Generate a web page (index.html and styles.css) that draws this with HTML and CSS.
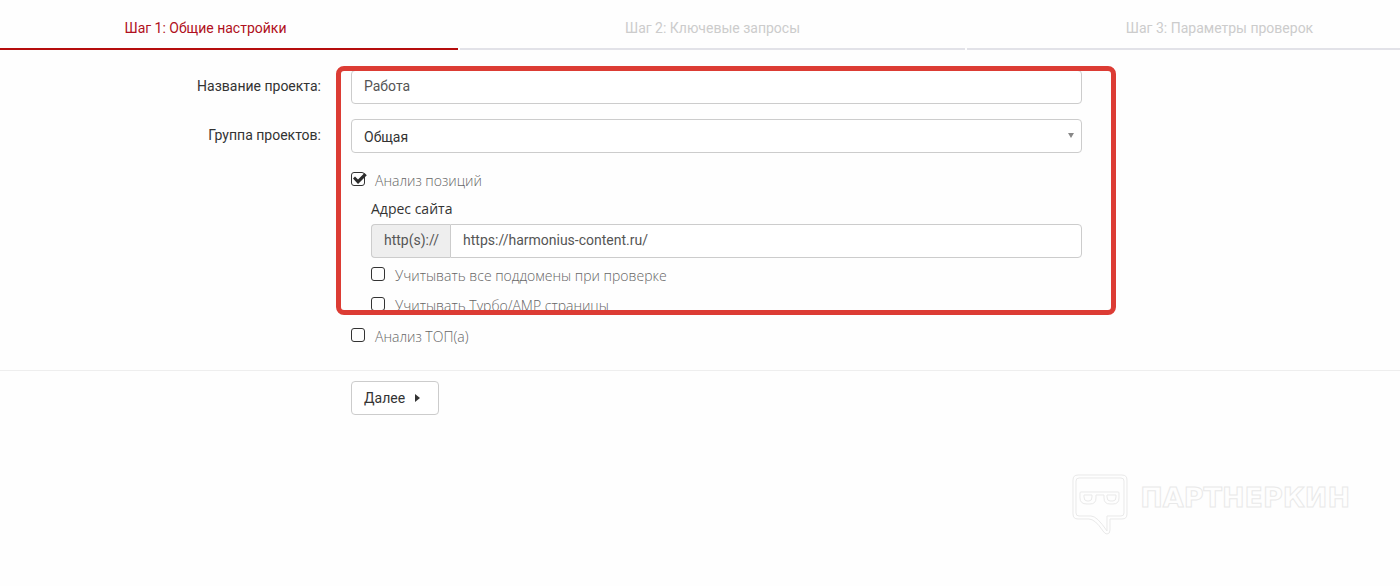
FILE: index.html
```
<!DOCTYPE html>
<html lang="ru">
<head>
<meta charset="UTF-8">
<meta name="viewport" content="width=device-width, initial-scale=1.0">
<title>Новый проект</title>
<link rel="stylesheet" href="styles.css">
</head>
<body>

<nav class="steps-wrap">
    <div class="steps">
        <a class="step active" href="#step1">Шаг 1: Общие настройки</a>
        <a class="step" href="#step2">Шаг 2: Ключевые запросы</a>
        <a class="step" href="#step3">Шаг 3: Параметры проверок</a>
    </div>
</nav>

<form>
    <div class="form-grid">
        <label class="control-label" for="name">Название проекта:</label>
        <input class="form-control" type="text" id="name" value="Работа">

        <label class="control-label" for="group">Группа проектов:</label>
        <div class="select">
            <select class="form-control" id="group">
                <option>Общая</option>
            </select>
        </div>

        <div class="options">
            <label class="check">
                <input type="checkbox" checked>
                <svg class="tick" viewBox="0 0 16 14"><path d="M2 6.5L4 4.5L7 7.5L13.5 1L15.8 3.3L7 12Z"/></svg>
                <span>Анализ позиций</span>
            </label>
            <div class="nested">
                <label class="site-label" for="site">Адрес сайта</label>
                <div class="input-group">
                    <span class="addon">http(s)://</span>
                    <input class="form-control" type="text" id="site" value="https://harmonius-content.ru/">
                </div>
                <label class="check">
                    <input type="checkbox">
                    <span>Учитывать все поддомены при проверке</span>
                </label>
                <label class="check">
                    <input type="checkbox">
                    <span>Учитывать Турбо/AMP страницы</span>
                </label>
            </div>
        </div>

        <div class="options last">
            <label class="check">
                <input type="checkbox">
                <span>Анализ ТОП(а)</span>
            </label>
        </div>

        <div class="highlight"></div>
    </div>

    <div class="form-grid actions">
        <button class="btn" type="button">Далее <span class="caret"></span></button>
    </div>
</form>

<footer class="brand">
    <svg class="brand-logo" viewBox="0 0 56 62" width="56" height="62">
        <path d="M6 1H50Q55 1 55 6V40Q55 45 50 45H38V56Q38 60 35 60Q33 60 31 57Q23 45 17 45H6Q1 45 1 40V6Q1 1 6 1Z"/>
        <path d="M7 4H49Q52 4 52 7V39Q52 42 49 42H35V57Q25 42 19 42H7Q4 42 4 39V7Q4 4 7 4Z"/>
        <path d="M9 18H46Q47 18 47 19V24Q47 30 41 30H38Q32 30 32 24V21H24V24Q24 30 18 30H15Q8 30 8 24V19Q8 18 9 18Z"/>
        <path d="M12 21H20V23Q20 27 17 27H15Q12 27 12 23ZM35 21H44V23Q44 27 41 27H38Q35 27 35 23Z"/>
    </svg>
    <span class="brand-name">ПАРТНЕРКИН</span>
</footer>

</body>
</html>
```

FILE: styles.css
```
* {
    box-sizing: border-box;
}
body {
    margin: 0;
    background: #fefefe;
    color: #333;
    font-family: Roboto, "Liberation Sans", sans-serif;
    font-size: 14px;
    line-height: 20px;
}

/* steps */
.steps-wrap {
    overflow: hidden;
}
.steps {
    display: flex;
    gap: 2px;
    margin: 0 -72px 0 -47px;
}
.step {
    flex: 1;
    padding: 18px 0 10px;
    border-bottom: 2px solid #e2e2e8;
    color: #ccc;
    text-align: center;
    text-decoration: none;
}
.step.active {
    border-color: #b50d0d;
    color: #b01020;
}

/* form */
.form-grid {
    position: relative;
    display: grid;
    grid-template-columns: 321fr 731fr 288fr;
    column-gap: 30px;
    padding-top: 20px;
}
.control-label {
    grid-column: 1;
    padding-top: 6px;
    text-align: right;
}
.form-control {
    width: 100%;
    height: 34px;
    padding: 0 12px 2px;
    border: 1px solid #ccc;
    border-radius: 4px;
    background: #fff;
    color: #555;
    font: inherit;
}
.form-grid > .form-control,
.select {
    margin-bottom: 15px;
}
.select {
    position: relative;
}
.select .form-control {
    display: block;
    padding: 2px 12px 0;
    color: #333;
    appearance: none;
}
.select::after {
    content: "";
    position: absolute;
    top: 14px;
    right: 8px;
    border: solid transparent;
    border-width: 5px 3px 0;
    border-top-color: #888;
}
.options {
    grid-column: 2;
}
.options.last {
    padding-top: 1px;
}
.check {
    position: relative;
    display: flex;
    gap: 10px;
    height: 30px;
    padding-top: 3px;
    color: #666;
    font-family: "Open Sans", sans-serif;
    font-weight: 300;
}
.check input {
    width: 14px;
    height: 14px;
    margin: 1px 0 0;
    border: 1px solid #333;
    border-radius: 3px;
    appearance: none;
}
.tick {
    position: absolute;
    top: 4px;
    left: 0;
    width: 16px;
    height: 14px;
    fill: #2c2c2c;
}
.nested {
    padding-left: 20px;
}
.site-label {
    display: block;
    height: 26px;
    padding-top: 1px;
    font-family: "Open Sans", sans-serif;
}
.input-group {
    display: flex;
    margin-bottom: 5px;
}
.addon {
    height: 34px;
    padding: 5px 11px 0 12px;
    border: 1px solid #ccc;
    border-right: 0;
    border-radius: 4px 0 0 4px;
    background: #eee;
    color: #555;
}
.input-group .form-control {
    flex: 1;
    border-radius: 0 4px 4px 0;
}
.highlight {
    position: absolute;
    grid-area: 1 / 2 / 4 / 3;
    inset: -4px -34px 8px -15px;
    border: 5px solid #dc3c34;
    border-radius: 8px;
    pointer-events: none;
}

.actions {
    margin-top: 16px;
    padding-top: 10px;
    border-top: 1px solid #eee;
}
.btn {
    grid-column: 2;
    justify-self: start;
    display: flex;
    align-items: center;
    gap: 10px;
    height: 34px;
    padding: 0 18px 0 12px;
    border: 1px solid #ccc;
    border-radius: 4px;
    background: #fff;
    color: #333;
    font: inherit;
}
.caret {
    border: solid transparent;
    border-width: 4px 0 4px 5px;
    border-left-color: #333;
}

/* brand */
.brand {
    display: flex;
    justify-content: flex-end;
    gap: 12px;
    margin-top: 59px;
    padding-right: 50px;
}
.brand-logo {
    fill: none;
    stroke: #e9e9e9;
}
.brand-name {
    padding-top: 8px;
    color: #fefefe;
    font-family: "DejaVu Sans", sans-serif;
    font-size: 27px;
    font-weight: bold;
    line-height: 32px;
    -webkit-text-stroke: 1px #e9e9e9;
}
```
